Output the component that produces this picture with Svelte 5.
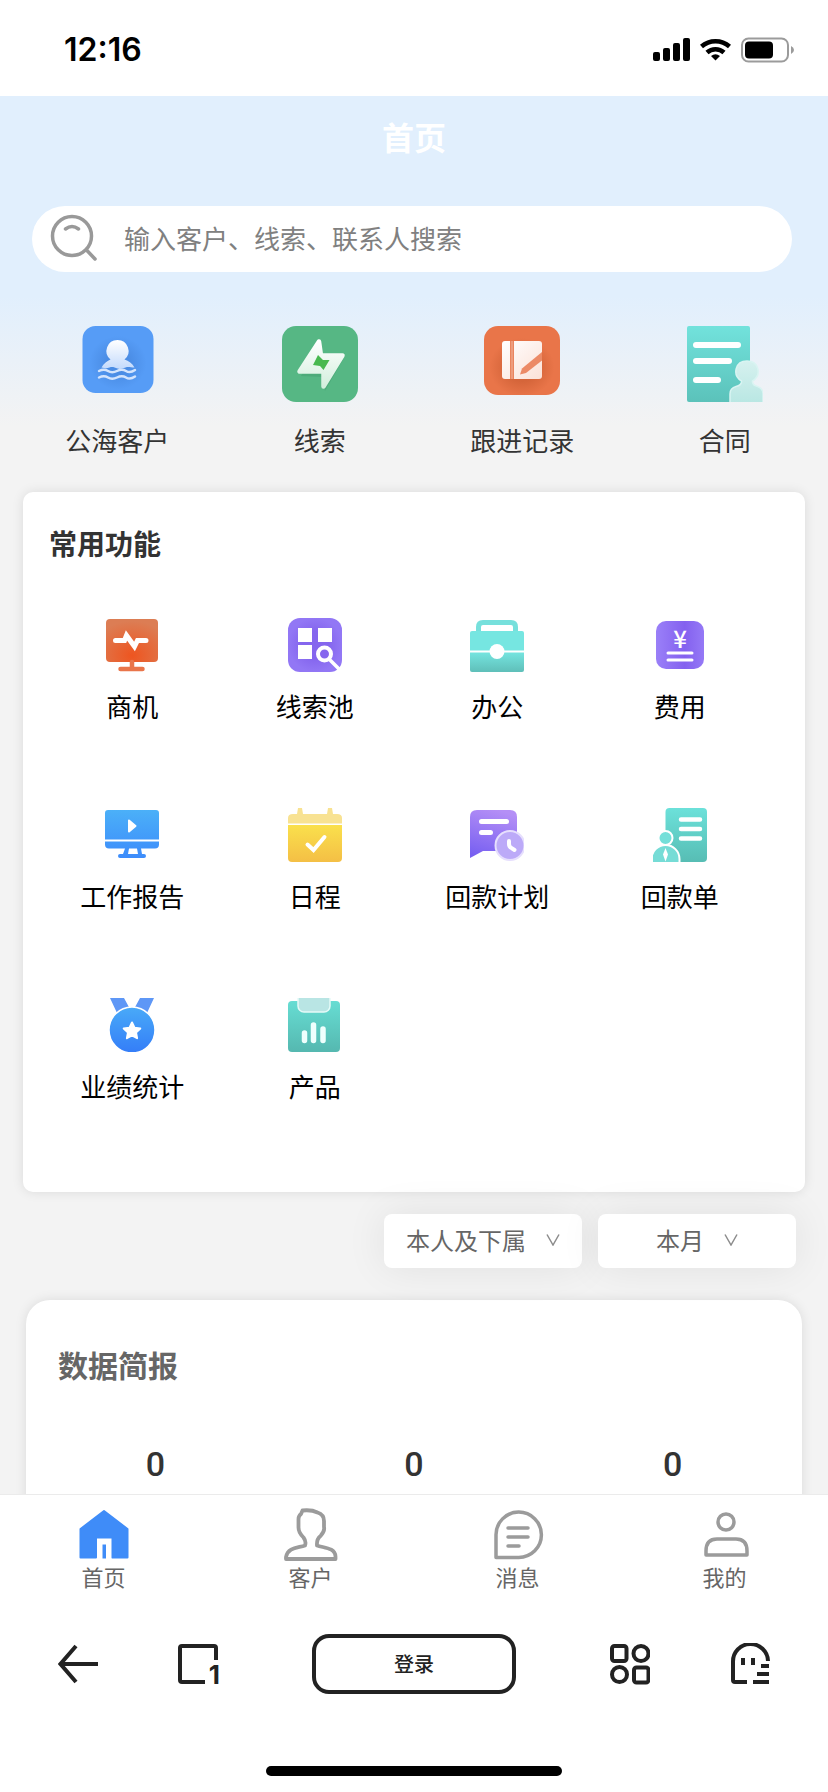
<script>
  const shortcuts = [
    { id: 'sea', label: '公海客户' },
    { id: 'clue', label: '线索' },
    { id: 'follow', label: '跟进记录' },
    { id: 'contract', label: '合同' }
  ];
  const features = [
    { id: 'chance', label: '商机' },
    { id: 'pool', label: '线索池' },
    { id: 'office', label: '办公' },
    { id: 'cost', label: '费用' },
    { id: 'report', label: '工作报告' },
    { id: 'calendar', label: '日程' },
    { id: 'plan', label: '回款计划' },
    { id: 'receipt', label: '回款单' },
    { id: 'medal', label: '业绩统计' },
    { id: 'product', label: '产品' }
  ];
  const filters = [
    { name: 'scope', title: '范围', value: '本人及下属' },
    { name: 'period', title: '时间', value: '本月' }
  ];
  const figures = [0, 0, 0];
  const tabs = [
    { id: 'home', label: '首页' },
    { id: 'customer', label: '客户' },
    { id: 'message', label: '消息' },
    { id: 'mine', label: '我的' }
  ];
  let active = $state('home');
</script>

{#snippet shortcutIcon(id)}
  <svg width="76" height="76" viewBox="0 0 76 76" aria-hidden="true">
    {#if id === 'sea'}
      <defs>
        <linearGradient id="seaMan" x2="0" y2="1"><stop stop-color="#fff" /><stop offset="1" stop-color="#c3dafc" /></linearGradient>
        <radialGradient id="seaBg" cy=".55"><stop offset=".3" stop-color="#4a8ce4" /><stop offset=".8" stop-color="#569cf6" /></radialGradient>
      </defs>
      <rect x="3.500" width="71" height="67" rx="13" fill="url(#seaBg)" />
      <path d="M38.500 14a11 11 0 0 1 7 19.500c4 1.500 8 4 10 8-4 0-6-1-9 0s-5 2-8 1-5-2-8-1-4 1-8 0c2-4 6-6.500 9-8A11 11 0 0 1 38.500 14Z" fill="url(#seaMan)" />
      <g fill="none" stroke="#d3e4fd" stroke-width="2.500" stroke-linecap="round">
        <path d="M20 45q5-2.500 9 0t9 0 9 0 9-1" /><path d="M20 51.500q5-2.500 9 0t9 0 9 0 9-1" />
      </g>
    {:else if id === 'clue'}
      <defs><linearGradient id="bolt" x2="0" y2="1"><stop stop-color="#fff" /><stop offset="1" stop-color="#d3efdd" /></linearGradient></defs>
      <rect width="76" height="76" rx="14" fill="#56b784" />
      <path d="M19 50 37 19l3 13h22L43 65l-2-14Z" fill="#3c9668" opacity=".35" />
      <path d="M37 15.500 17.500 45.500H41.500V60.500L60.500 29.500H39Z" fill="url(#bolt)" stroke="url(#bolt)" stroke-width="4.500" stroke-linejoin="round" />
      <path d="m36 29-5 10 7 1 3.500 4 6-10-6.500 0Z" fill="#48b94f" />
    {:else if id === 'follow'}
      <defs>
        <linearGradient id="book" x2="1" y2="1"><stop stop-color="#fff" /><stop offset="1" stop-color="#fbe1d7" /></linearGradient>
        <radialGradient id="followBg" cy=".6"><stop offset=".4" stop-color="#d5653a" /><stop offset=".85" stop-color="#e97549" /></radialGradient>
      </defs>
      <rect width="76" height="69" rx="14" fill="url(#followBg)" />
      <rect x="18" y="15" width="40" height="38" rx="3" fill="url(#book)" />
      <path d="M28 15v38" stroke="#e9855f" stroke-width="4" /><path d="M28 15v38" stroke="#f3b39b" stroke-width="1" />
      <path d="M58 26v8.500L42 47l-6 1.500 2-6Z" fill="#ec8a66" />
    {:else}
      <defs><linearGradient id="contractBg" x2="0" y2="1"><stop stop-color="#72e2dc" /><stop offset="1" stop-color="#5bc2ba" /></linearGradient>
        <linearGradient id="contractMan" x2="0" y2="1"><stop stop-color="#d6f1ef" /><stop offset="1" stop-color="#b9e7e3" /></linearGradient></defs>
      <path d="M2 0h59q2 0 2 2v74H2q-2 0-2-2V2q0-2 2-2Z" fill="url(#contractBg)" />
      <path d="M9 19h42M9 35h33M9 54h22" stroke="#fff" stroke-width="6" stroke-linecap="round" />
      <path d="M43 77V68q0-6 6-7.500 6-1.500 5.500-5.500C45 49 48 35 60 35s15 14 5.500 20q-.5 4 5 5.500 5.500 2 5.500 7V77Z" fill="url(#contractMan)" stroke="#d9f4f2" stroke-width="1.500" />
    {/if}
  </svg>
{/snippet}

{#snippet featureIcon(id)}
  <svg width="54" height="54" viewBox="0 0 54 54" aria-hidden="true">
    {#if id === 'chance'}
      <defs><radialGradient id="chanceBg" cx=".5" cy=".85" r=".8"><stop stop-color="#ee5520" /><stop offset="1" stop-color="#dc7d54" /></radialGradient></defs>
      <rect x="1" y="1" width="52" height="43" rx="4" fill="url(#chanceBg)" />
      <path d="M27 44v7M15.500 51h22" stroke="#e9754a" stroke-width="4.500" stroke-linecap="round" />
      <path d="M10.500 22.500h9l2-5 8 11 3-6h8.500" fill="none" stroke="#fff" stroke-width="5" stroke-linecap="round" stroke-linejoin="miter" />
    {:else if id === 'pool'}
      <defs><radialGradient id="poolBg"><stop offset=".5" stop-color="#8566ee" /><stop offset="1" stop-color="#9277f5" /></radialGradient></defs>
      <rect width="54" height="54" rx="12" fill="url(#poolBg)" />
      <path d="M10 10h14v14H10ZM30 10h14v14H30ZM10 27h14v14H10Z" fill="#fff" />
      <circle cx="36.500" cy="36" r="6.500" fill="#8566ee" stroke="#fff" stroke-width="4" />
      <path d="m41 41 10 10" stroke="#fff" stroke-width="3.500" />
    {:else if id === 'office'}
      <defs><linearGradient id="caseBg" x2="0" y2="1"><stop offset=".5" stop-color="#76e6e1" /><stop offset="1" stop-color="#5fbfb9" /></linearGradient></defs>
      <path d="M8.500 15V9q0-4.500 4.500-4.500h28q4.500 0 4.500 4.500v6" fill="none" stroke="#76e0dc" stroke-width="5" />
      <path d="M2 13h50q2 0 2 2v37q0 2-2 2H2q-2 0-2-2V15q0-2 2-2Z" fill="url(#caseBg)" />
      <path d="M0 33.500h54" stroke="#fff" stroke-width="2" /><circle cx="27" cy="33.500" r="7.500" fill="#fff" />
    {:else if id === 'cost'}
      <defs><linearGradient id="costBg"><stop stop-color="#9a80f8" /><stop offset=".6" stop-color="#8461ef" /><stop offset="1" stop-color="#9579f6" /></linearGradient></defs>
      <rect x="3" y="3" width="48" height="48" rx="10" fill="url(#costBg)" />
      <text x="27" y="30" text-anchor="middle" fill="#fff" class="yen">¥</text>
      <path d="M15 35h24M15 42h24" stroke="#fff" stroke-width="3" stroke-linecap="round" />
    {:else if id === 'report'}
      <defs><linearGradient id="reportBg" x2="0" y2="1"><stop stop-color="#4bb0f8" /><stop offset="1" stop-color="#3d8cfb" /></linearGradient></defs>
      <path d="M0 31.500V5q0-3 3-3h48q3 0 3 3v26.500ZM0 33.500h54v3q0 4-4 4H36l1 5.500h2q2 0 2 2t-2 2H15q-2 0-2-2t2-2h3l2-5.500H4q-4 0-4-4ZM24 40.500l-1 5.500h10l-1-5.500Z" fill="url(#reportBg)" fill-rule="evenodd" />
      <path d="M24 12.500v11l6.500-5.500Z" fill="#fff" stroke="#fff" stroke-width="2" stroke-linejoin="round" />
    {:else if id === 'calendar'}
      <defs><linearGradient id="calBg" x2="0" y2="1"><stop stop-color="#fae04c" /><stop offset="1" stop-color="#f4bf45" /></linearGradient></defs>
      <path d="M0 15.500V10q0-4 5-4h4l1-6h4l1 6h24l1-6h4l1 6h4q5 0 5 4v5.500Z" fill="#f8e292" />
      <path d="M0 17h54V50q0 4-4 4H4q-4 0-4-4Z" fill="url(#calBg)" />
      <path d="m19.500 36.500 6 5.500L36.500 29" fill="none" stroke="#fff" stroke-width="4" stroke-linecap="round" />
    {:else if id === 'plan'}
      <defs><linearGradient id="planBg" x1=".6" x2=".3" y2="1"><stop stop-color="#b48ff6" /><stop offset="1" stop-color="#7860f1" /></linearGradient></defs>
      <path d="M0 50V9q0-7 7-7h33q7 0 7 7v34H13Z" fill="url(#planBg)" />
      <path d="M11.500 13.500h25M11.500 24.500h9" stroke="#fff" stroke-width="5" stroke-linecap="round" />
      <circle cx="40" cy="37.500" r="14.500" fill="#bcaaf8" stroke="#e6dffd" stroke-width="2" />
      <path d="M39 33v3q0 3 2.500 4l3 2" fill="none" stroke="#fff" stroke-width="4" stroke-linecap="round" />
    {:else if id === 'receipt'}
      <defs><linearGradient id="receiptBg" x2="0" y2="1"><stop stop-color="#6ce1da" /><stop offset="1" stop-color="#57bdb4" /></linearGradient></defs>
      <rect x="12.500" width="41.500" height="54" rx="4" fill="url(#receiptBg)" />
      <path d="M28 11.500h19M28 21h19M28 30.500h19" stroke="#fff" stroke-width="4.500" stroke-linecap="round" />
      <circle cx="12.500" cy="30" r="7" fill="#74dfd9" stroke="#fff" stroke-width="2" />
      <path d="M-1.500 56V51a14 14 0 0 1 28 0v5Z" fill="#76dcd6" stroke="#fff" stroke-width="2" />
      <path d="m12.500 40 2.500 6.500-2.500 7-2.500-7Z" fill="#fff" />
    {:else if id === 'medal'}
      <defs><linearGradient id="medalBg" x2="0" y2="1"><stop stop-color="#49aaf8" /><stop offset="1" stop-color="#347df8" /></linearGradient></defs>
      <path d="M5 0h14l6 11-13 4ZM49 0H35l-6 11 13 4Z" fill="#5e97f6" />
      <circle cx="27" cy="32" r="23" fill="url(#medalBg)" stroke="#fff" stroke-width="1.500" />
      <path d="m27 24.500 2.500 5.300 5.800.7-4.300 4 1.100 5.700-5.100-2.800-5.100 2.800 1.100-5.700-4.300-4 5.800-.7Z" fill="#fff" stroke="#fff" stroke-width="2" stroke-linejoin="round" />
    {:else}
      <defs><linearGradient id="productBg" x2="0" y2="1"><stop stop-color="#67ddd3" /><stop offset="1" stop-color="#55b8b0" /></linearGradient></defs>
      <rect y="3" width="52" height="51" rx="4" fill="url(#productBg)" />
      <rect x="10" y="-5" width="32" height="19" rx="6" fill="#b9e5e4" stroke="#e6faf8" stroke-width="1.500" />
      <path d="M16.500 35v7.500M25.500 27v15.500M35 31v11.500" stroke="#effffd" stroke-width="5.500" stroke-linecap="round" />
    {/if}
  </svg>
{/snippet}

{#snippet tabIcon(id)}
  <svg width="54" height="54" viewBox="0 0 54 54" fill="none" stroke="#9b9b9b" stroke-width="3.500" stroke-linejoin="round" stroke-linecap="round" aria-hidden="true">
    {#if id === 'home'}
      <path d="M27 3 3.500 21v28.500H19V30h16v19.500h15.500V21Z" fill="#3f8cf8" stroke="#3f8cf8" stroke-width="2" />
      <path d="M20 30.500h14.500V52H20Z" fill="#fff" stroke="none" /><path d="M25.500 36.500H29v14h-3.500Z" fill="#3f8cf8" stroke="none" />
    {:else if id === 'customer'}
      <path d="M18.500 2.500q9-1 15 2 6.500 2 6.500 8.500v6q1 4-3.500 9-4 3-3.500 9.500c7 2.500 18 2 18.500 11v2.500H2V49C4 39 14 40 21 37.500q1.500-4-1.500-8-5-5-5-10V11q0-3 2.500-5Z" stroke-width="3.800" />
    {:else if id === 'message'}
      <path d="M5 49.500V27a22.700 22.700 0 1 1 22.700 22.500Z" /><path d="M17 20h20M17 29h20M17 38h11" />
    {:else}
      <circle cx="28" cy="14" r="8" /><path d="M8 47V43q0-12 11-12h19q11 0 11 12v4Z" />
    {/if}
  </svg>
{/snippet}

<div class="app">
  <header class="status">
    <time>12:16</time>
    <svg width="141" height="26" viewBox="0 0 141 26" aria-hidden="true">
      <path d="M2 15h3q2 0 2 2v5q0 2-2 2H2q-2 0-2-2v-5q0-2 2-2ZM12 11h3q2 0 2 2v9q0 2-2 2h-3q-2 0-2-2v-9q0-2 2-2ZM22 6h3q2 0 2 2v14q0 2-2 2h-3q-2 0-2-2V8q0-2 2-2ZM32 1h3q2 0 2 2v19q0 2-2 2h-3q-2 0-2-2V3q0-2 2-2Z" />
      <g fill="none" stroke="#000" stroke-width="4.500"><path d="M48.500 9.500a21 21 0 0 1 28 0M54 15.500a12.500 12.500 0 0 1 17 0" /></g>
      <path d="m62.500 23.500-4.500-4.500q4.500-3.500 9 0Z" />
      <rect x="89" y="1.500" width="46" height="23" rx="6.500" fill="none" stroke="#9b9b9b" stroke-width="2" />
      <rect x="92" y="4.500" width="28" height="17" rx="4" /><path d="M138 9q3 1.500 3 4t-3 4Z" fill="#9b9b9b" />
    </svg>
  </header>

  <main>
    <h1>首页</h1>
    <label class="search">
      <svg width="48" height="48" viewBox="0 0 48 48" fill="none" stroke="#999" stroke-width="3.500" stroke-linecap="round" aria-hidden="true">
        <circle cx="22" cy="22" r="19.500" /><path d="m36.500 36 8.500 9M15.500 15q6.500-5 13 0" />
      </svg>
      <input type="search" placeholder="输入客户、线索、联系人搜索" aria-label="搜索" />
    </label>

    <nav class="shortcuts" aria-label="快捷入口">
      {#each shortcuts as item}
        <button>{@render shortcutIcon(item.id)}<span>{item.label}</span></button>
      {/each}
    </nav>

    <section class="card features">
      <h2>常用功能</h2>
      <div class="grid">
        {#each features as item}
          <button>{@render featureIcon(item.id)}<span>{item.label}</span></button>
        {/each}
      </div>
    </section>

    <div class="filters">
      {#each filters as f}
        <label>
          <select name={f.name} aria-label={f.title}><option>{f.value}</option></select>
          <svg width="14" height="12" viewBox="0 0 14 12" fill="none" stroke="#8c8c8c" stroke-width="1.500" aria-hidden="true"><path d="m1 .5 6 10.500L13 .5" /></svg>
        </label>
      {/each}
    </div>

    <section class="card brief">
      <h2>数据简报</h2>
      <div class="figures">
        {#each figures as n}<strong>{n}</strong>{/each}
      </div>
    </section>
  </main>

  <footer>
    <nav class="tabs" aria-label="主导航">
      {#each tabs as tab}
        <button aria-current={active === tab.id ? 'page' : undefined} onclick={() => (active = tab.id)}>
          {@render tabIcon(tab.id)}<span>{tab.label}</span>
        </button>
      {/each}
    </nav>
    <div class="browser">
      <div class="group">
        <button aria-label="返回">
          <svg width="40" height="42" viewBox="0 0 40 42" fill="none" stroke="#222" stroke-width="4" aria-hidden="true"><path d="M40 21H3M18 3 2.500 21 18 39" /></svg>
        </button>
        <button aria-label="窗口">
          <svg class="windows" width="40" height="42" viewBox="0 0 40 42" fill="none" stroke="#222" stroke-width="4" aria-hidden="true">
            <path d="M38 17V5q0-2-2-2H4Q2 3 2 5v32q0 2 2 2h23" /><text x="42" y="41" text-anchor="end" fill="#222" stroke="none" class="count">1</text>
          </svg>
        </button>
      </div>
      <button class="login">登录</button>
      <div class="group">
        <button aria-label="应用">
          <svg width="40" height="42" viewBox="0 0 40 42" fill="none" stroke="#222" stroke-width="4" aria-hidden="true">
            <rect x="2" y="3" width="14.500" height="15" rx="2.500" /><circle cx="31" cy="10.500" r="7.500" /><circle cx="9.500" cy="31.500" r="7.500" /><rect x="24" y="24.500" width="14.500" height="15" rx="2.500" />
          </svg>
        </button>
        <button aria-label="更多">
          <svg width="40" height="42" viewBox="0 0 40 42" fill="none" stroke="#222" stroke-width="4" aria-hidden="true">
            <path d="M17 39H5q-2 0-2-2V19a17.500 17.500 0 0 1 35-1M13 15v7M23 15v7M31 23h8M27 31h12M23 39h16" />
          </svg>
        </button>
      </div>
    </div>
    <div class="indicator"></div>
  </footer>
</div>

<style>
  :global(body) { margin: 0; background: #fff; }
  .app {
    height: 100vh;
    display: flex;
    flex-direction: column;
    font-family: "Noto Sans CJK SC", "Noto Sans", sans-serif;
    color: #333;
  }
  button {
    border: 0;
    padding: 0;
    background: none;
    font: inherit;
    color: inherit;
    cursor: pointer;
  }
  svg { display: block; flex: none; }
  .status {
    flex: none;
    height: 96px;
    padding: 4px 34px 0 64px;
    box-sizing: border-box;
    display: flex;
    align-items: center;
    justify-content: space-between;
    color: #000;
  }
  time { font: 600 32px/40px Inter, sans-serif; }
  main {
    flex: 1;
    min-height: 0;
    overflow: hidden auto;
    scrollbar-width: none;
    background: linear-gradient(#e1effd 200px, #f3f3f3 330px);
  }
  h1 {
    margin: 0;
    text-align: center;
    font-size: 32px;
    line-height: 80px;
    font-weight: 700;
    color: #fff;
  }
  .search {
    margin: 30px 36px 0 32px;
    height: 64px;
    padding: 0 24px 2px 18px;
    display: flex;
    align-items: center;
    gap: 26px;
    background: #fff;
    border-radius: 33px;
  }
  input {
    flex: 1;
    min-width: 0;
    border: 0;
    padding: 0;
    outline: 0;
    background: none;
    font: inherit;
    font-size: 26px;
    line-height: 38px;
    color: #333;
  }
  input::placeholder { color: #808080; opacity: 1; }
  .shortcuts {
    display: grid;
    grid-template-columns: repeat(4, 1fr);
    padding: 54px 2px 0 16px;
  }
  .shortcuts button, .grid button {
    display: flex;
    flex-direction: column;
    align-items: center;
    font-size: 26px;
    line-height: 36px;
  }
  .shortcuts button { gap: 20px; }
  .card { background: #fff; box-shadow: 0 0 12px rgba(0, 0, 0, 0.1); }
  .features {
    margin: 34px 23px 0;
    padding: 34px 34px 88px 18px;
    border-radius: 10px;
  }
  h2 { margin: 0; font-weight: 700; }
  .features h2 { padding-left: 8px; font-size: 28px; line-height: 34px; }
  .grid {
    margin-top: 58px;
    display: grid;
    grid-template-columns: repeat(4, 1fr);
    row-gap: 84px;
    color: #000;
  }
  .grid button { gap: 16px; }
  .yen { font: 500 24px "Noto Sans CJK SC", sans-serif; }
  .filters {
    margin-top: 22px;
    padding-right: 32px;
    display: flex;
    justify-content: flex-end;
    gap: 16px;
  }
  .filters label {
    width: 198px;
    height: 52px;
    padding-bottom: 2px;
    display: flex;
    align-items: center;
    justify-content: center;
    gap: 20px;
    background: #fff;
    border-radius: 8px;
    box-shadow: 0 0 40px rgba(0, 0, 0, 0.08);
  }
  select {
    appearance: none;
    border: 0;
    padding: 0;
    background: none;
    font: inherit;
    font-size: 24px;
    line-height: 36px;
    color: #666;
  }
  .brief {
    margin: 32px 26px 0;
    padding: 46px 0 60px;
    border-radius: 24px;
  }
  .brief h2 { padding-left: 32px; font-size: 30px; line-height: 36px; color: #666; }
  .figures {
    margin-top: 62px;
    display: grid;
    grid-template-columns: repeat(3, 1fr);
    text-align: center;
  }
  .figures strong { font: 500 34px/40px Roboto, sans-serif; }
  footer {
    flex: none;
    border-top: 1px solid #ebebeb;
    background: #fff;
    padding-bottom: 16px;
  }
  .tabs {
    display: grid;
    grid-template-columns: repeat(4, 1fr);
    padding: 13px 0 15px;
  }
  .tabs button {
    display: flex;
    flex-direction: column;
    align-items: center;
    font-size: 22px;
    line-height: 28px;
    color: #666;
  }
  .browser {
    margin-top: 29px;
    padding: 0 58px;
    display: flex;
    align-items: center;
    justify-content: space-between;
  }
  .group { display: flex; gap: 80px; }
  .windows { overflow: visible; }
  .count { font: 700 26px Inter, sans-serif; }
  .login {
    width: 204px;
    height: 60px;
    padding-bottom: 2px;
    border: 4px solid #222;
    border-radius: 17px;
    font-size: 20px;
    font-weight: 500;
    color: #222;
  }
  .indicator {
    width: 296px;
    height: 10px;
    margin: 72px auto 0;
    border-radius: 5px;
    background: #000;
  }
</style>
